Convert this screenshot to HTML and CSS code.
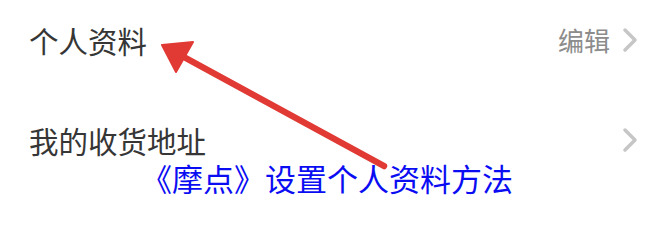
FILE: index.html
```html
<!DOCTYPE html>
<html lang="zh">
<head>
<meta charset="utf-8">
<link rel="stylesheet" href="styles.css">
</head>
<body>
<div class="page">
  <div class="list">
    <div class="row">
      <span class="label">个人资料</span>
      <span class="right"><span class="value">编辑</span>
        <svg class="chev" width="16" height="26" viewBox="0 0 16 26"><polyline points="3,3 13,13 3,23" fill="none" stroke="#c6c6c6" stroke-width="3.5" stroke-linecap="round" stroke-linejoin="round"/></svg>
      </span>
    </div>
    <div class="row">
      <span class="label">我的收货地址</span>
      <span class="right">
        <svg class="chev" width="16" height="26" viewBox="0 0 16 26"><polyline points="3,3 13,13 3,23" fill="none" stroke="#c6c6c6" stroke-width="3.5" stroke-linecap="round" stroke-linejoin="round"/></svg>
      </span>
    </div>
  </div>
  <svg class="arrow" width="650" height="220" viewBox="0 0 650 220">
    <line x1="182" y1="56" x2="384" y2="166" stroke="#e13a34" stroke-width="6.5" stroke-linecap="round"/>
    <polygon points="162,45 193,42 176,72" fill="#e13a34" stroke="#e13a34" stroke-width="2" stroke-linejoin="round"/>
  </svg>
  <div class="caption">《摩点》设置个人资料方法</div>
</div>
</body>
</html>
```
FILE: styles.css
```css
html, body {
  margin: 0;
  padding: 0;
  background: #ffffff;
}
.page {
  position: relative;
  width: 650px;
  height: 220px;
  overflow: hidden;
  font-family: "Noto Sans CJK SC", "Noto Sans", sans-serif;
}
.list {
  display: flex;
  flex-direction: column;
  gap: 20px;
  padding: 0 12px 0 29px;
}
.row {
  height: 80px;
  display: flex;
  align-items: center;
  justify-content: space-between;
}
.label {
  font-size: 29.5px;
  line-height: 30px;
  color: #363636;
}
.right {
  display: flex;
  align-items: center;
  gap: 12px;
}
.value {
  font-size: 26px;
  line-height: 28px;
  color: #8c8c8c;
}
.chev {
  display: block;
}
.arrow {
  position: absolute;
  left: 0;
  top: 0;
  pointer-events: none;
}
.caption {
  position: absolute;
  left: 0;
  right: 0;
  top: 160px;
  text-align: center;
  font-size: 31px;
  line-height: 36px;
  color: #0a0cf2;
  padding-left: 4px;
}
```
